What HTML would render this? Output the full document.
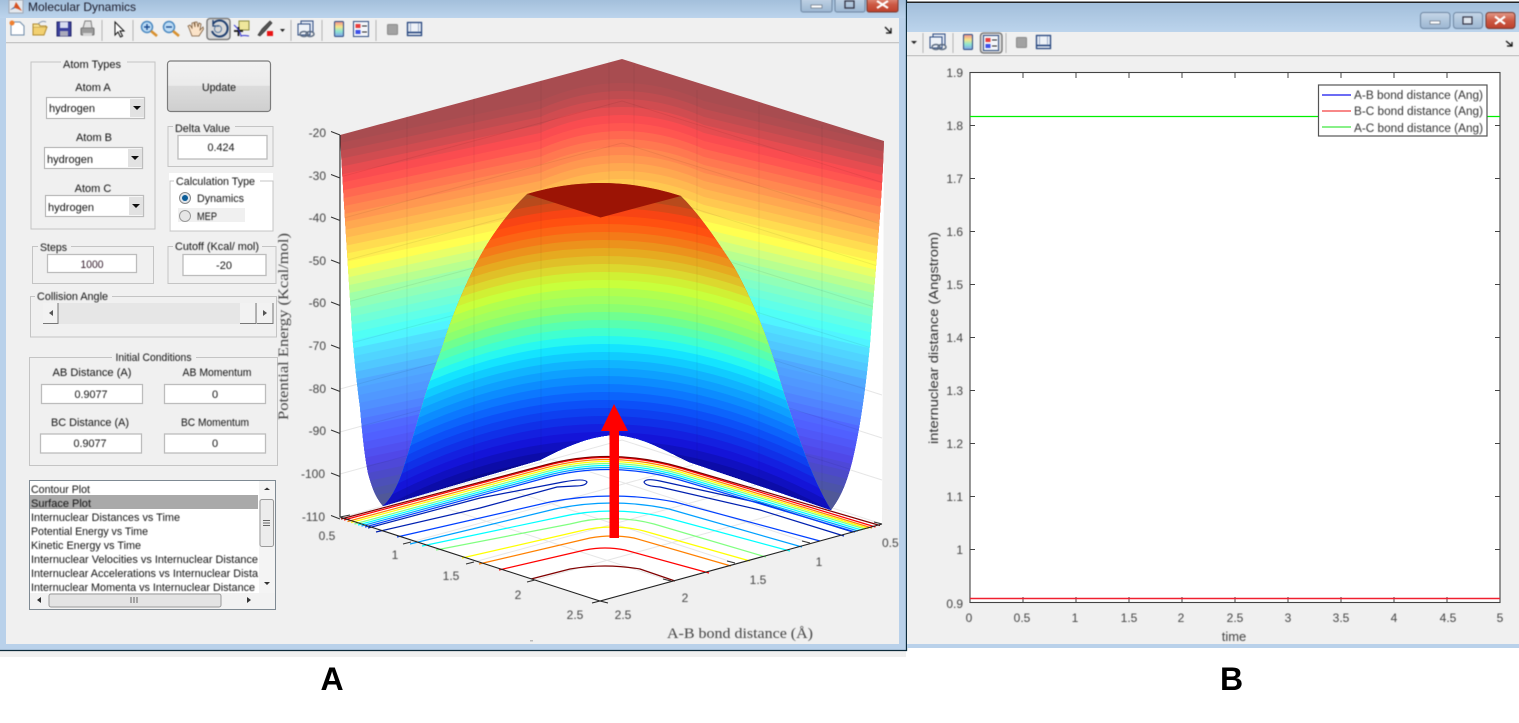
<!DOCTYPE html>
<html><head><meta charset="utf-8"><title>Molecular Dynamics</title>
<style>
html,body{margin:0;padding:0;background:#fff;width:1519px;height:723px;overflow:hidden}
svg{display:block}
text,.bl{filter:blur(.4px)}
text{font-family:"Liberation Sans",Arial,sans-serif;font-size:11px;fill:#111}
.m{text-anchor:middle}
.e{fill:#fff;stroke:#bdbdbd;stroke-width:1.3}
.g{fill:none;stroke:#c4c4c4}
.bg{fill:#f0f0f0}
.t{font-size:12px;fill:#444}
.s{font-family:"Liberation Serif",serif;font-size:15px;fill:#444}
.sep{stroke:#b4b4b4;stroke-width:1}
.c{fill:none;stroke-width:1.2}
.k{stroke:#333;stroke-width:1}
.big{font-size:32px;font-weight:bold;fill:#000;filter:none}
</style></head><body>
<svg width="1519" height="723" viewBox="0 0 1519 723" xmlns="http://www.w3.org/2000/svg">
<defs>
<linearGradient id="ti" x1="0" y1="0" x2="0" y2="1"><stop offset="0" stop-color="#a3bfdb"/><stop offset="1" stop-color="#bcd4ec"/></linearGradient>
<linearGradient id="wb" x1="0" y1="0" x2="0" y2="1"><stop offset="0" stop-color="#c6d6e8"/><stop offset=".5" stop-color="#b0c6dc"/><stop offset="1" stop-color="#9cb6d2"/></linearGradient>
<linearGradient id="wc" x1="0" y1="0" x2="0" y2="1"><stop offset="0" stop-color="#e39a8a"/><stop offset=".5" stop-color="#cd5a44"/><stop offset="1" stop-color="#bd3f2c"/></linearGradient>
<linearGradient id="up" x1="0" y1="0" x2="0" y2="1"><stop offset="0" stop-color="#f2f2f2"/><stop offset=".48" stop-color="#ebebeb"/><stop offset=".5" stop-color="#dcdcdc"/><stop offset="1" stop-color="#cfcfcf"/></linearGradient>
<linearGradient id="cb" x1="0" y1="0" x2="0" y2="1"><stop offset="0" stop-color="#f08a8a"/><stop offset=".35" stop-color="#f5e68a"/><stop offset=".65" stop-color="#8fe6d0"/><stop offset="1" stop-color="#7fa0e8"/></linearGradient>
<clipPath id="cw"><path d="M340 135L622 59L884 141C882 200 877 250 870 343C866 385 860 430 852 462C846 485 840 498 831 510L689 462C660 448 640 436 614 435C590 436 565 447 540 460L383 506C376 498 372 488 368 473C364 452 362 430 360 407C357 385 355 365 353 343C350 300 345 220 340 135Z"/></clipPath>
<clipPath id="ch"><path d="M527 194Q604 171 681 196C700 215 718 242 734 267C748 292 760 320 768 343C776 365 780 382 786 400C796 430 812 480 831 510L689 462C660 448 640 436 614 435C590 436 565 447 540 460L383 506C390 500 397 488 403 470C408 455 415 430 423 403C428 385 435 368 443 345C450 322 460 297 473 270C485 245 505 215 527 194Z"/></clipPath>
<path id="b" d="M330 2L540 -42Q622 -78 704 -42L890 2V40H330Z"/>
<path id="f" d="M-240 70Q0 -70 240 70L300 170H-300Z"/>
<g id="lnk"><rect x="3" y="0" width="12" height="11" fill="#dfe6f2" stroke="#2c4a80"/><rect x="0" y="3" width="12" height="11" fill="#eef2f8" stroke="#2c4a80"/><ellipse cx="6" cy="13" rx="4" ry="2.500" fill="none" stroke="#5a6a80" stroke-width="1.500"/><ellipse cx="12" cy="13" rx="4" ry="2.500" fill="none" stroke="#5a6a80" stroke-width="1.500"/></g>
<g id="cbi"><rect x=".5" y=".5" width="9" height="15" rx="1" fill="url(#cb)" stroke="#2c4a80"/></g>
<g id="lgi"><rect x=".5" y=".5" width="15" height="15" fill="#f4f6fa" stroke="#2c4a80"/><rect x="2.500" y="3" width="5" height="4" fill="#e83c3c"/><rect x="2.500" y="9" width="5" height="4" fill="#3c50e8"/><path d="M9 5H14M9 11H14" stroke="#222"/></g>
<g id="sq"><rect x=".5" y=".5" width="10" height="10" rx="1" fill="#a2a2a2" stroke="#8a8a8a"/></g>
<g id="fr"><rect x=".5" y=".5" width="14" height="13" fill="#eef2f8" stroke="#23437c" stroke-width="1.300"/><path d="M1 10.500H14" stroke="#23437c" stroke-width="1.600"/><path d="M3.500 1V10M11.500 1V10" stroke="#8a9cc0" stroke-width=".8"/></g>
</defs>

<!-- Window A -->
<rect x="0" y="651" width="906" height="6" fill="#f0f0f0"/>
<rect x="0" y="0" width="906" height="650" fill="#b9d1ea"/>
<rect x="0" y="0" width="906" height="18" fill="url(#ti)"/>
<rect x="6" y="18" width="893" height="626" fill="#f0f0f0"/>
<path d="M0 650.500H906.500V0" fill="none" stroke="#0c2a3a" stroke-width="1.300"/>
<rect x="6" y="42" width="893" height="1.300" fill="#c6c6c6"/>
<g class="bl">
<rect x="9" y="0" width="14" height="13" fill="#e4e8ee" stroke="#a0a8b4"/>
<path d="M10 10L14 7L16 2L18 5L22 11L18 9L15 8Z" fill="#d8501e"/><path d="M10 10L14 7L15 8Z" fill="#3a70b0"/>
</g>
<text x="28" y="11" style="font-size:12px;fill:#1a1a2a" textLength="108" lengthAdjust="spacingAndGlyphs">Molecular Dynamics</text>
<g class="bl">
<rect x="801" y="-3" width="31" height="15" rx="2" fill="url(#wb)" stroke="#6f87a2"/><rect x="811" y="5" width="11" height="3" fill="#fff" stroke="#55606e" stroke-width=".6"/>
<rect x="835" y="-3" width="30" height="15" rx="2" fill="url(#wb)" stroke="#6f87a2"/><rect x="845" y="1" width="9" height="7" fill="none" stroke="#334" stroke-width="1.300"/>
<rect x="867" y="-3" width="31" height="15" rx="2" fill="url(#wc)" stroke="#7a3a30"/><path d="M877 1L888 8M888 1L877 8" stroke="#fff" stroke-width="2.200"/>
<path d="M885 27L891 33M891 28V33H886" fill="none" stroke="#111" stroke-width="1.300"/>
</g>

<!-- Toolbar A -->
<g class="bl">
<path d="M11 22H20L24 26V35H11Z" fill="#fff" stroke="#6d8aa8"/><circle cx="12" cy="23" r="2.500" fill="#f08030"/>
<path d="M33 27H47L44 35H33Z" fill="#f2d070" stroke="#b08a30"/><path d="M33 27V24H39L40 26H46V27" fill="#f6e090" stroke="#b08a30"/><path d="M38 24Q42 20 46 22" fill="none" stroke="#8a9ab0"/>
<rect x="57" y="22" width="14" height="14" fill="#3a3f9c" stroke="#23266a"/><rect x="60" y="22" width="8" height="6" fill="#d8dcf0"/><rect x="60" y="31" width="8" height="5" fill="#aab"/>
<rect x="81" y="28" width="13" height="7" rx="1" fill="#9a9a9a" stroke="#707070"/><path d="M83 28L85 21H91L92 28Z" fill="#e0e0e0" stroke="#808080"/><rect x="83" y="33" width="9" height="3" fill="#d4d4d4"/>
<path d="M115 22V35L118 32L120.500 37L122.500 36L120 31H124Z" fill="#fff" stroke="#111"/>
<circle cx="147" cy="27" r="5.500" fill="#bcdcf6" stroke="#4a88c0" stroke-width="1.500"/><path d="M151 31L157 36" stroke="#d8902e" stroke-width="2.600"/><path d="M144 27H150M147 24V30" stroke="#1a4a90" stroke-width="1.400"/>
<circle cx="169" cy="27" r="5.500" fill="#bcdcf6" stroke="#4a88c0" stroke-width="1.500"/><path d="M173 31L179 36" stroke="#d8902e" stroke-width="2.600"/><path d="M166 27H172" stroke="#1a4a90" stroke-width="1.400"/>
<path d="M189 28L188 26L190 25L192 28V23L194 22.500L195 27V22L197 22L198 27L199 23L201 24L200 30L203 27L203.500 29L199 36H192Z" fill="#fbe3c8" stroke="#7a5a3a" stroke-width=".8"/>
<rect x="207" y="18.500" width="23" height="21" rx="3" fill="#d8d8d8" stroke="#6f6f6f" stroke-width="1.300"/>
<path d="M213 24A8 8 0 1 1 212 31" fill="none" stroke="#1f3f70" stroke-width="2"/><path d="M213 20V26H219" fill="none" stroke="#1f3f70" stroke-width="1.300"/><circle cx="218" cy="29" r="3.500" fill="none" stroke="#5a7aa0"/>
<rect x="239" y="21" width="10" height="9" fill="#efe79c" stroke="#8a8a40"/><path d="M234 31H243M238.500 27V36" stroke="#111" stroke-width="1.700"/><path d="M234 25Q240 30 241 36Q243 35 249 36" fill="none" stroke="#3030d0"/>
<path d="M258 35L262 29L270 21L272 23L265 31L260 36Z" fill="#555" stroke="#333" stroke-width=".7"/><rect x="267" y="31" width="6" height="5" fill="#e81414"/>
<path d="M280 29H285L282.500 32Z" fill="#222"/>
<use href="#lnk" x="298" y="21"/>
<use href="#cbi" x="334" y="21"/>
<use href="#lgi" x="353" y="21"/>
<use href="#sq" x="387" y="24"/>
<use href="#fr" x="407" y="22"/>
<path d="M102 20V41M133 20V41M291 20V41M322 20V41M376 20V41" class="sep"/>
</g>

<!-- Left panel -->
<rect x="31" y="62" width="124" height="167" class="g"/><rect x="61" y="58" width="66" height="10" class="bg"/>
<text x="92" y="68" class="m" textLength="58" lengthAdjust="spacingAndGlyphs">Atom Types</text>
<text x="93" y="91" class="m">Atom A</text>
<text x="94" y="141" class="m">Atom B</text>
<text x="93" y="192" class="m">Atom C</text>
<g>
<rect x="46.500" y="97.500" width="98" height="21" class="e"/><rect x="130" y="99" width="14" height="18" fill="#e2e2e2"/><path d="M133 106H141L137 110Z" fill="#111"/><text x="49" y="112" textLength="46" lengthAdjust="spacingAndGlyphs">hydrogen</text>
<rect x="44.500" y="147.500" width="98" height="21" class="e"/><rect x="128" y="149" width="14" height="18" fill="#e2e2e2"/><path d="M131 156H139L135 160Z" fill="#111"/><text x="47" y="163" textLength="46" lengthAdjust="spacingAndGlyphs">hydrogen</text>
<rect x="45.500" y="195.500" width="98" height="21" class="e"/><rect x="129" y="197" width="14" height="18" fill="#e2e2e2"/><path d="M132 204H140L136 208Z" fill="#111"/><text x="48" y="211" textLength="46" lengthAdjust="spacingAndGlyphs">hydrogen</text>
</g>
<rect x="167.500" y="61" width="103" height="50.500" rx="3" fill="url(#up)" stroke="#7c7c7c" stroke-width="1.200"/>
<text x="219" y="91" class="m" textLength="34" lengthAdjust="spacingAndGlyphs">Update</text>

<rect x="168" y="126.500" width="105" height="40" class="g"/><rect x="173" y="122" width="62" height="10" class="bg"/>
<text x="175" y="132" textLength="55" lengthAdjust="spacingAndGlyphs">Delta Value</text>
<rect x="178" y="135.500" width="89" height="23.500" class="e"/><text x="221" y="151" class="m" textLength="27" lengthAdjust="spacingAndGlyphs">0.424</text>

<rect x="169" y="173" width="104" height="58" fill="#fff"/>
<rect x="170" y="181" width="103" height="50" fill="none" stroke="#c4c4c4"/><rect x="174" y="174" width="86" height="12" fill="#fff"/>
<text x="176" y="185" textLength="79" lengthAdjust="spacingAndGlyphs">Calculation Type</text>
<circle cx="185" cy="198" r="5.500" fill="#dfe4ea" stroke="#8a8a8a"/><circle cx="185" cy="198" r="3" fill="#0a5c98"/>
<text x="197" y="202" textLength="47" lengthAdjust="spacingAndGlyphs">Dynamics</text>
<rect x="178" y="208" width="67" height="14" fill="#f0f0f0"/>
<circle cx="185" cy="216" r="5.500" fill="#e6e6e6" stroke="#9a9a9a"/>
<text x="197" y="220" textLength="20" lengthAdjust="spacingAndGlyphs">MEP</text>

<rect x="32.500" y="246.500" width="121" height="37" class="g"/><rect x="38" y="242" width="33" height="10" class="bg"/>
<text x="40" y="251" textLength="27" lengthAdjust="spacingAndGlyphs">Steps</text>
<rect x="47.500" y="254.500" width="89" height="18" class="e"/><text x="92" y="268" class="m" textLength="23" lengthAdjust="spacingAndGlyphs" style="fill:#301828">1000</text>

<rect x="168" y="246.500" width="108" height="37" class="g"/><rect x="173" y="242" width="89" height="10" class="bg"/>
<text x="175" y="250" textLength="84" lengthAdjust="spacingAndGlyphs">Cutoff (Kcal/ mol)</text>
<rect x="183" y="254.500" width="83" height="21" class="e"/><text x="224" y="269" class="m">-20</text>

<rect x="30.500" y="296.500" width="246" height="40.500" class="g"/><rect x="35" y="292" width="77" height="10" class="bg"/>
<text x="37" y="300" textLength="71" lengthAdjust="spacingAndGlyphs">Collision Angle</text>
<rect x="43" y="303" width="230" height="21" fill="#e6e6e6"/>
<rect x="43" y="303" width="15" height="21" fill="#f2f2f2"/><path d="M43 323.500H58V303" fill="none" stroke="#777"/>
<path d="M53 310V316L49 313Z" fill="#555"/>
<rect x="240" y="303" width="16" height="21" fill="#f2f2f2"/><path d="M240 323.500H256V303" fill="none" stroke="#777"/>
<rect x="257" y="303" width="16" height="21" fill="#f2f2f2"/><path d="M257 323.500H273V303" fill="none" stroke="#777"/>
<path d="M263 310V316L267 313Z" fill="#555"/>

<rect x="29.500" y="357.500" width="248" height="108" class="g"/><rect x="112" y="352" width="84" height="10" class="bg"/>
<text x="153.500" y="361" class="m" textLength="76" lengthAdjust="spacingAndGlyphs">Initial Conditions</text>
<text x="92" y="376" class="m" textLength="79" lengthAdjust="spacingAndGlyphs">AB Distance (A)</text>
<text x="217" y="376" class="m" textLength="69" lengthAdjust="spacingAndGlyphs">AB Momentum</text>
<text x="90" y="426" class="m" textLength="78" lengthAdjust="spacingAndGlyphs">BC Distance (A)</text>
<text x="215" y="426" class="m" textLength="68" lengthAdjust="spacingAndGlyphs">BC Momentum</text>
<rect x="41.500" y="384.500" width="101" height="19" class="e"/><text x="91" y="398" class="m" textLength="33" lengthAdjust="spacingAndGlyphs">0.9077</text>
<rect x="164.500" y="384.500" width="101" height="19" class="e"/><text x="215" y="398" class="m">0</text>
<rect x="40.500" y="434" width="101" height="19" class="e"/><text x="90" y="447" class="m" textLength="33" lengthAdjust="spacingAndGlyphs">0.9077</text>
<rect x="164.500" y="434" width="101" height="19" class="e"/><text x="215" y="447" class="m">0</text>

<rect x="29.500" y="480.500" width="246" height="129" fill="#fff" stroke="#7f8a93"/>
<rect x="30" y="495" width="228" height="14" fill="#a9a9a9"/>
<g>
<text x="31" y="493" textLength="59" lengthAdjust="spacingAndGlyphs">Contour Plot</text>
<text x="31" y="507" textLength="60" lengthAdjust="spacingAndGlyphs">Surface Plot</text>
<text x="31" y="521" textLength="149" lengthAdjust="spacingAndGlyphs">Internuclear Distances vs Time</text>
<text x="31" y="535" textLength="117" lengthAdjust="spacingAndGlyphs">Potential Energy vs Time</text>
<text x="31" y="549" textLength="110" lengthAdjust="spacingAndGlyphs">Kinetic Energy vs Time</text>
<text x="31" y="563" textLength="227" lengthAdjust="spacingAndGlyphs">Internuclear Velocities vs Internuclear Distance</text>
<text x="31" y="577" textLength="227" lengthAdjust="spacingAndGlyphs">Internuclear Accelerations vs Internuclear Dista</text>
<text x="31" y="591" textLength="224" lengthAdjust="spacingAndGlyphs">Internuclear Momenta vs Internuclear Distance</text>
</g>
<rect x="259" y="481" width="16" height="112" fill="#f4f4f4"/>
<path d="M264 490H270L267 487.500Z" fill="#333"/><path d="M264 582H270L267 585Z" fill="#333"/>
<rect x="260" y="499.500" width="13.500" height="47" rx="2" fill="#ececec" stroke="#9a9a9a"/>
<path d="M263 520.500H270M263 523H270M263 525.500H270" stroke="#666"/>
<rect x="30" y="593" width="245" height="16" fill="#f2f2f2"/>
<rect x="49" y="594" width="172" height="13" rx="2" fill="#e4e4e4" stroke="#9a9a9a"/>
<path d="M131 597V603M134 597V603M137 597V603" stroke="#666"/>
<path d="M41 597V603L37 600Z" fill="#333"/><path d="M247 597V603L251 600Z" fill="#333"/>

<!-- Surface plot -->
<path d="M340 135L622 59L884 141L882 524L600 601L340 517Z" fill="#fff"/>
<g stroke="#e6e6e6" fill="none">
<path d="M340 518L622 440L882 524M609 440V60M634 440V65M407 500V115M474 482V97M541 463V80M697 464V90M759 485V105M822 505V125"/>
<path d="M340 474L622 397L882 480M340 432L622 355L882 438M340 389L622 312L882 395"/>
<path d="M411 542L693 465M474 562L756 485M535 580L817 503M810 543L550 459M735 563L475 479M671 581L411 497"/>
</g>
<g clip-path="url(#cw)">
<rect x="330" y="50" width="570" height="480" fill="#a84c50"/>
<use href="#b" y="143" fill="#b04c50"/><use href="#b" y="151" fill="#bf4c50"/><use href="#b" y="159" fill="#d04c50"/><use href="#b" y="167" fill="#e64c50"/><use href="#b" y="175" fill="#fa4c50"/><use href="#b" y="183" fill="#ff5650"/><use href="#b" y="191" fill="#ff6850"/><use href="#b" y="199" fill="#ff7850"/><use href="#b" y="207" fill="#ff8850"/><use href="#b" y="215" fill="#ff9850"/><use href="#b" y="223" fill="#ffa850"/><use href="#b" y="231" fill="#ffb850"/><use href="#b" y="239" fill="#ffc850"/><use href="#b" y="247" fill="#ffdc50"/><use href="#b" y="255" fill="#ffee50"/><use href="#b" y="263" fill="#ffff50"/><use href="#b" y="271" fill="#e8ff68"/><use href="#b" y="279" fill="#d0ff80"/><use href="#b" y="287" fill="#b8ff90"/><use href="#b" y="295" fill="#a0ffa8"/><use href="#b" y="303" fill="#90ffb8"/><use href="#b" y="311" fill="#80ffc8"/><use href="#b" y="319" fill="#70ffd8"/><use href="#b" y="327" fill="#60ffe8"/><use href="#b" y="335" fill="#50fff5"/><use href="#b" y="343" fill="#50f4ff"/><use href="#b" y="351" fill="#50e0ff"/><use href="#b" y="359" fill="#50d4ff"/><use href="#b" y="367" fill="#50c8ff"/><use href="#b" y="375" fill="#50b8ff"/><use href="#b" y="383" fill="#50a8ff"/><use href="#b" y="391" fill="#50a0ff"/><use href="#b" y="399" fill="#5098ff"/><use href="#b" y="407" fill="#5090ff"/><use href="#b" y="415" fill="#5084ff"/><use href="#b" y="423" fill="#5078ff"/><use href="#b" y="431" fill="#5068ff"/><use href="#b" y="439" fill="#5060ff"/><use href="#b" y="447" fill="#5058f8"/><use href="#b" y="455" fill="#5050f0"/><use href="#b" y="463" fill="#5048e8"/><use href="#b" y="471" fill="#4e48d8"/><use href="#b" y="479" fill="#4c4ac8"/><use href="#b" y="487" fill="#4c50b8"/><use href="#b" y="495" fill="#4c54a8"/><use href="#b" y="503" fill="#505898"/>
<g stroke="#000" stroke-opacity=".06" fill="none">
<path d="M609 60V440M634 65V440M407 115V510M474 97V510M541 80V510M697 90V510M759 105V510M822 125V510"/>
<path d="M340 177L622 101L884 183M340 219L622 143L884 225M340 262L622 186L884 268M340 304L622 228L884 310M340 346L622 270L884 352M340 389L622 312L884 395M340 432L622 355L884 438M340 474L622 397L884 480"/>
</g>
</g>
<g clip-path="url(#ch)">
<rect x="370" y="170" width="480" height="345" fill="#a85020"/>
<use href="#f" x="604" y="192" fill="#b84a1c"/><use href="#f" x="604" y="200" fill="#d84818"/><use href="#f" x="604" y="208" fill="#f84414"/><use href="#f" x="604" y="216" fill="#ff5010"/><use href="#f" x="604" y="224" fill="#fc6414"/><use href="#f" x="604" y="232" fill="#f47a18"/><use href="#f" x="604" y="240" fill="#ec921c"/><use href="#f" x="604" y="248" fill="#e6aa20"/><use href="#f" x="604" y="256" fill="#e0c028"/><use href="#f" x="604" y="264" fill="#dcd82e"/><use href="#f" x="604" y="272" fill="#d0f034"/><use href="#f" x="604" y="280" fill="#c8ff3c"/><use href="#f" x="604" y="288" fill="#b0ff50"/><use href="#f" x="604" y="296" fill="#a0ff60"/><use href="#f" x="604" y="304" fill="#8cff70"/><use href="#f" x="604" y="312" fill="#70ff90"/><use href="#f" x="604" y="320" fill="#58ffb0"/><use href="#f" x="604" y="328" fill="#40ffd0"/><use href="#f" x="604" y="336" fill="#28f8f0"/><use href="#f" x="604" y="344" fill="#14e4ff"/><use href="#f" x="604" y="352" fill="#10ccff"/><use href="#f" x="604" y="360" fill="#10b4ff"/><use href="#f" x="604" y="368" fill="#0ea0ff"/><use href="#f" x="604" y="376" fill="#0c8cff"/><use href="#f" x="604" y="384" fill="#0c78ff"/><use href="#f" x="604" y="392" fill="#0c64fc"/><use href="#f" x="604" y="400" fill="#0c50f8"/><use href="#f" x="604" y="408" fill="#0e40f0"/><use href="#f" x="604" y="416" fill="#1030e8"/><use href="#f" x="604" y="424" fill="#1420e0"/><use href="#f" x="604" y="432" fill="#1414d8"/><use href="#f" x="604" y="440" fill="#1010c0"/><use href="#f" x="604" y="448" fill="#0c0ca8"/><use href="#f" x="604" y="456" fill="#0a0a90"/><use href="#f" x="604" y="464" fill="#0a0a80"/>
<path d="M407 115V510M474 97V510M541 80V510M609 60V440M697 90V510M759 105V510" stroke="#000" stroke-opacity=".05" fill="none"/>
</g>
<path d="M527 194Q604 171 681 196L600.500 217.500Z" fill="#9c1405"/>

<!-- contours -->
<g class="c">
<path class="c" stroke="#800000" d="M531 579L570 569Q605 563 640 569L675 581"/>
<path class="c" stroke="#ff0000" d="M499 570L585 550Q605 546 625 550L709 573"/>
<path class="c" stroke="#ff8000" d="M479 564L590 538Q612 534 634 538L731 566"/>
<path class="c" stroke="#ffff00" d="M462 558L580 531Q612 523 644 531L750 561"/>
<path class="c" stroke="#80ff80" d="M436 550L570 524Q612 513 654 524L766 557"/>
<path class="c" stroke="#00ffff" d="M422 546L560 517Q612 505 664 517L790 551"/>
<path class="c" stroke="#00a0ff" d="M410 544L555 509Q612 497 669 509L802 547"/>
<path class="c" stroke="#0040ff" d="M397 537L550 502Q612 490 675 502L820 541"/>
<path class="c" stroke="#0020b0" d="M368 528L480 498L563 482Q585 478 587 482Q586 486 575 486L557 487L480 508L376 532"/>
<path class="c" stroke="#0020b0" d="M853 532L760 503L660 481Q646 478 644 482Q645 486 660 487L760 510L844 536"/>
<path class="c" stroke="#0040ff" d="M365 527L545 478Q610 460 680 480L855 532"/>
<path class="c" stroke="#00a0ff" d="M361.500 526L545 476Q610 458 680 478L858 531"/>
<path class="c" stroke="#00ffff" d="M358 525L545 474Q610 456 680 476L861.500 530"/>
<path class="c" stroke="#80ff80" d="M354.500 524L545 472Q610 454 680 474L865 529"/>
<path class="c" stroke="#ffff00" d="M351 522.500L545 470Q610 452 680 472L868.500 528.500"/>
<path class="c" stroke="#ff8000" d="M347.500 521.500L545 468Q610 450 680 470L872 528"/>
<path class="c" stroke="#ff0000" d="M344 520L545 466Q610 448 680 468L875.500 527"/>
<path class="c" stroke="#800000" d="M341 519L545 465Q610 447 680 467L880 525.500"/>
</g>

<!-- axes -->
<path d="M340 135V517L592 598.500L600 601L882 524M600 601L608 603M600 601L592 603" fill="none" stroke="#222" stroke-width="1.100"/>
<path d="M331 131.500L340 135M331 174.500L340 178M331 217L340 220.500M331 260L340 263.500M331 302L340 305.500M331 345L340 348.500M331 388L340 391.500M331 430L340 433.500M331 473L340 476.500M331 515.500L340 519" class="k" fill="none"/>
<path d="M340 517L350 515M403 544L411 542M466 564L474 562M527 582L535 580M802 541L810 543M727 561L735 563M663 579L671 581M874 522L882 524" class="k" fill="none"/>
<g>
<text x="326" y="137" class="t" text-anchor="end">-20</text><text x="326" y="180" class="t" text-anchor="end">-30</text><text x="326" y="222" class="t" text-anchor="end">-40</text><text x="326" y="265" class="t" text-anchor="end">-50</text><text x="326" y="307" class="t" text-anchor="end">-60</text><text x="326" y="350" class="t" text-anchor="end">-70</text><text x="326" y="393" class="t" text-anchor="end">-80</text><text x="326" y="435" class="t" text-anchor="end">-90</text><text x="325" y="478" class="t" text-anchor="end">-100</text><text x="325" y="521" class="t" text-anchor="end">-110</text>
</g>
<text x="327" y="540" class="t m">0.5</text><text x="395" y="559" class="t m">1</text><text x="451" y="580" class="t m">1.5</text><text x="518" y="599" class="t m">2</text><text x="575" y="619" class="t m">2.5</text>
<text x="882" y="547" class="t">0.5</text><text x="819" y="566" class="t m">1</text><text x="758" y="584" class="t m">1.5</text><text x="685" y="602" class="t m">2</text><text x="623" y="619" class="t m">2.5</text>
<text x="667" y="638" class="s" textLength="146" lengthAdjust="spacingAndGlyphs">A-B bond distance (Å)</text>
<text transform="translate(288 420) rotate(-90)" class="s" textLength="187" lengthAdjust="spacingAndGlyphs">Potential Energy (Kcal/mol)</text>
<rect x="530" y="640" width="3" height="1.500" fill="#bbb"/>

<!-- arrow -->
<rect x="609.500" y="430" width="9.500" height="108" fill="#ff0000"/>
<path d="M614 404L628 431H601Z" fill="#ff0000"/>

<!-- Window B -->
<rect x="907" y="2" width="612" height="646" fill="#b9d1ea"/>
<rect x="907" y="3" width="612" height="29" fill="url(#ti)"/>
<rect x="907" y="1.500" width="612" height="1.500" fill="#222"/>
<rect x="907" y="32" width="612" height="612" fill="#f0f0f0"/>
<rect x="907" y="55" width="612" height="1.300" fill="#c6c6c6"/>
<g class="bl">
<rect x="1420.500" y="12.500" width="29.500" height="16" rx="3" fill="url(#wb)" stroke="#6f87a2"/><rect x="1430" y="21" width="10" height="3" fill="#fff" stroke="#55606e" stroke-width=".6"/>
<rect x="1453.500" y="12.500" width="29" height="16" rx="3" fill="url(#wb)" stroke="#6f87a2"/><rect x="1463" y="17" width="9" height="7" fill="#dfe6ee" stroke="#334" stroke-width="1.200"/>
<rect x="1486" y="12.500" width="29" height="16" rx="3" fill="url(#wc)" stroke="#7a3a30"/><path d="M1495 16.500L1505 24M1505 16.500L1495 24" stroke="#fff" stroke-width="2.200"/>
<path d="M911 41H917L914 44Z" fill="#222"/>
<path d="M923 33V53M953 33V53M1006 33V53" class="sep"/>
<use href="#lnk" x="930" y="34"/>
<use href="#cbi" x="963" y="34"/>
<rect x="980.500" y="33" width="21.500" height="20" rx="3" fill="#dcdcdc" stroke="#6f6f6f" stroke-width="1.300"/>
<use href="#lgi" x="983" y="35"/>
<use href="#sq" x="1016" y="37"/>
<use href="#fr" x="1036" y="35"/>
<path d="M1506 41L1512 46M1512 42V46H1507" fill="none" stroke="#111" stroke-width="1.300"/>
</g>

<rect x="970" y="72.500" width="530" height="530" fill="#fff" stroke="#444" stroke-width="1.100"/>
<path d="M1023 73v5M1076 73v5M1129 73v5M1182 73v5M1235 73v5M1288 73v5M1341 73v5M1394 73v5M1447 73v5M1023 602v-5M1076 602v-5M1129 602v-5M1182 602v-5M1235 602v-5M1288 602v-5M1341 602v-5M1394 602v-5M1447 602v-5M970 125.500h5M970 178.500h5M970 231.500h5M970 284.500h5M970 337.500h5M970 390.500h5M970 443.500h5M970 496.500h5M970 549.500h5M1500 125.500h-5M1500 178.500h-5M1500 231.500h-5M1500 284.500h-5M1500 337.500h-5M1500 390.500h-5M1500 443.500h-5M1500 496.500h-5M1500 549.500h-5" stroke="#444" fill="none"/>
<path d="M970 116.500H1500" stroke="#00f000" stroke-width="1.300"/>
<path d="M970 598.500H1500" stroke="#f02030" stroke-width="1.400"/>
<g>
<text x="963" y="77" class="t" text-anchor="end">1.9</text><text x="963" y="130" class="t" text-anchor="end">1.8</text><text x="963" y="183" class="t" text-anchor="end">1.7</text><text x="963" y="236" class="t" text-anchor="end">1.6</text><text x="963" y="289" class="t" text-anchor="end">1.5</text><text x="963" y="342" class="t" text-anchor="end">1.4</text><text x="963" y="395" class="t" text-anchor="end">1.3</text><text x="963" y="448" class="t" text-anchor="end">1.2</text><text x="963" y="501" class="t" text-anchor="end">1.1</text><text x="963" y="554" class="t" text-anchor="end">1</text><text x="963" y="608" class="t" text-anchor="end">0.9</text>
<text x="969" y="622" class="t m">0</text><text x="1022" y="622" class="t m">0.5</text><text x="1075" y="622" class="t m">1</text><text x="1129" y="622" class="t m">1.5</text><text x="1181" y="622" class="t m">2</text><text x="1235" y="622" class="t m">2.5</text><text x="1288" y="622" class="t m">3</text><text x="1341" y="622" class="t m">3.5</text><text x="1394" y="622" class="t m">4</text><text x="1448" y="622" class="t m">4.5</text><text x="1500" y="622" class="t m">5</text>
</g>
<text x="1234" y="641" class="m" style="font-size:13px;fill:#444">time</text>
<text transform="translate(938 444) rotate(-90)" style="font-size:13px;fill:#333" textLength="212" lengthAdjust="spacingAndGlyphs">internuclear distance (Angstrom)</text>
<rect x="1318.500" y="85" width="168.500" height="51" fill="#fff" stroke="#555" stroke-width="1.200"/>
<path d="M1322 95H1351" stroke="#3c3cf0" stroke-width="1.400"/><path d="M1322 111H1351" stroke="#f01010"/><path d="M1322 127H1351" stroke="#10e010"/>
<text x="1354" y="99" textLength="129" lengthAdjust="spacingAndGlyphs" style="font-size:11.500px;fill:#333">A-B bond distance (Ang)</text>
<text x="1354" y="115" textLength="129" lengthAdjust="spacingAndGlyphs" style="font-size:11.500px;fill:#333">B-C bond distance (Ang)</text>
<text x="1354" y="132" textLength="129" lengthAdjust="spacingAndGlyphs" style="font-size:11.500px;fill:#333">A-C bond distance (Ang)</text>

<text x="332" y="690" class="big m">A</text>
<text x="1231.500" y="690" class="big m">B</text>
</svg>
</body></html>
